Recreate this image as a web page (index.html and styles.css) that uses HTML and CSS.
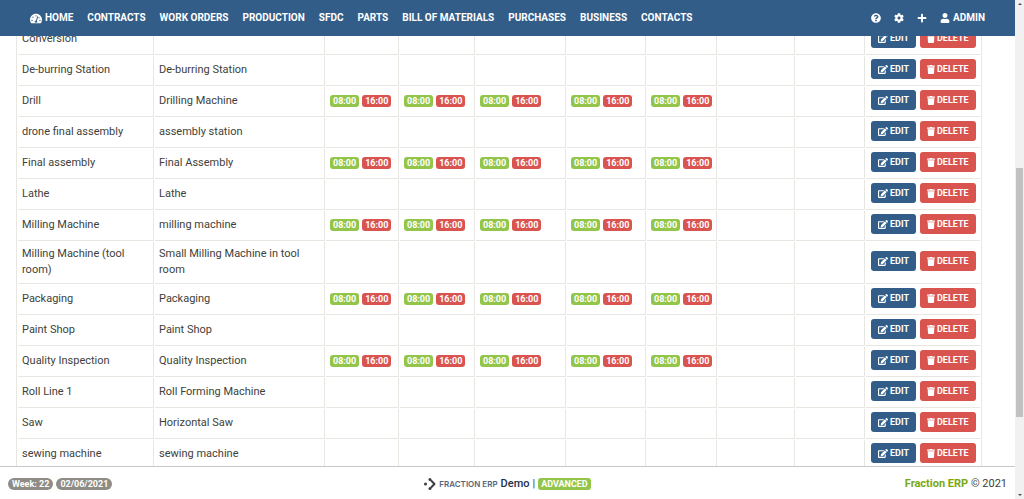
FILE: index.html
```html
<!DOCTYPE html>
<html lang="en">
<head>
    <meta charset="UTF-8">
    <meta name="viewport" content="width=device-width, initial-scale=1.0">
    <title>Fraction ERP - Work Stations</title>
    <link rel="stylesheet" href="styles.css">
</head>
<body>
    <!-- Icons -->
    <svg class="sprite" aria-hidden="true">
        <symbol id="i-dash" viewBox="0 0 576 512"><path fill-rule="evenodd" d="M288 32C129 32 0 161 0 320c0 53 14 102 39 145 6 10 16 15 27 15h444c11 0 21-5 27-15 25-43 39-92 39-145C576 161 447 32 288 32zm0 64c18 0 32 14 32 32s-14 32-32 32-32-14-32-32 14-32 32-32zM96 384c-18 0-32-14-32-32s14-32 32-32 32 14 32 32-14 32-32 32zm48-160c-18 0-32-14-32-32s14-32 32-32 32 14 32 32-14 32-32 32zm247-40l-62 185c14 12 23 29 23 47 0 12-3 23-9 32H233c-6-9-9-20-9-32 0-34 27-62 61-64l61-183c4-13 18-20 30-16 13 5 20 18 15 31zm14 25c7-10 17-17 27-17 18 0 32 14 32 32s-14 32-32 32c-16 0-28-11-31-25zM480 384c-18 0-32-14-32-32s14-32 32-32 32 14 32 32-14 32-32 32z"/></symbol>
        <symbol id="i-help" viewBox="0 0 512 512"><path d="M504 256c0 137-111 248-248 248S8 393 8 256C8 119 119 8 256 8s248 111 248 248zM262.700 90c-54.500 0-89.300 23-116.500 63.800-3.600 5.300-2.400 12.400 2.700 16.300l34.700 26.300c5.200 3.900 12.600 3 16.700-2.100 17.900-22.700 30.100-35.800 57.300-35.800 20.400 0 45.700 13.100 45.700 33 0 15-12.400 22.700-32.500 34C247.100 238.500 216 255 216 296v4c0 6.600 5.400 12 12 12h56c6.600 0 12-5.400 12-12v-1.300c0-28.700 83.800-29.900 83.800-107.500C379.800 132.700 319.200 90 262.700 90zM256 338c-25.400 0-46 20.600-46 46s20.600 46 46 46 46-20.600 46-46-20.600-46-46-46z"/></symbol>
        <symbol id="i-cog" viewBox="0 0 512 512"><path d="M487.400 315.700l-42.600-24.600c4.300-23.200 4.300-47 0-70.200l42.600-24.600c4.900-2.800 7.100-8.600 5.500-14-11.100-35.600-30-67.800-54.700-94.600-3.800-4.100-10-5.100-14.800-2.300L380.800 110c-17.900-15.400-38.500-27.300-60.800-35.100V25.800c0-5.600-3.900-10.500-9.400-11.700-36.700-8.200-74.300-7.800-109.200 0-5.500 1.200-9.400 6.100-9.400 11.700V75c-22.200 7.900-42.800 19.800-60.800 35.100L88.700 85.500c-4.900-2.800-11-1.900-14.800 2.300-24.700 26.700-43.600 58.900-54.700 94.600-1.700 5.400.6 11.200 5.500 14L67.300 221c-4.300 23.200-4.300 47 0 70.200l-42.600 24.600c-4.900 2.800-7.100 8.600-5.500 14 11.100 35.600 30 67.800 54.700 94.600 3.800 4.100 10 5.100 14.800 2.300l42.600-24.600c17.900 15.400 38.500 27.300 60.800 35.100v49.200c0 5.600 3.900 10.500 9.400 11.700 36.700 8.200 74.300 7.800 109.200 0 5.500-1.200 9.400-6.100 9.400-11.700v-49.200c22.200-7.900 42.800-19.800 60.800-35.100l42.600 24.600c4.900 2.800 11 1.900 14.800-2.300 24.700-26.700 43.600-58.900 54.700-94.600 1.500-5.500-.7-11.300-5.600-14.100zM256 336c-44.100 0-80-35.900-80-80s35.900-80 80-80 80 35.900 80 80-35.900 80-80 80z"/></symbol>
        <symbol id="i-plus" viewBox="0 0 448 512"><path d="M416 208H272V64c0-17.700-14.300-32-32-32h-32c-17.700 0-32 14.300-32 32v144H32c-17.700 0-32 14.300-32 32v32c0 17.700 14.300 32 32 32h144v144c0 17.700 14.300 32 32 32h32c17.700 0 32-14.300 32-32V304h144c17.700 0 32-14.300 32-32v-32c0-17.700-14.300-32-32-32z"/></symbol>
        <symbol id="i-user" viewBox="0 0 448 512"><path d="M224 256c70.700 0 128-57.300 128-128S294.700 0 224 0 96 57.300 96 128s57.300 128 128 128zm89.600 32h-16.700c-22.200 10.200-46.900 16-72.900 16s-50.600-5.800-72.900-16h-16.700C60.200 288 0 348.200 0 422.400V464c0 26.500 21.500 48 48 48h352c26.500 0 48-21.500 48-48v-41.600c0-74.200-60.200-134.400-134.400-134.400z"/></symbol>
        <symbol id="i-edit" viewBox="0 0 576 512"><path d="M402.600 83.200l90.200 90.200c3.800 3.800 3.800 10 0 13.800L274.400 405.600l-92.800 10.300c-12.400 1.400-22.900-9.100-21.500-21.500l10.300-92.800L388.800 83.200c3.800-3.800 10-3.800 13.800 0zm162-22.900l-48.800-48.800c-15.200-15.200-39.900-15.200-55.200 0l-35.400 35.400c-3.800 3.800-3.800 10 0 13.800l90.200 90.200c3.800 3.800 10 3.800 13.800 0l35.400-35.400c15.200-15.300 15.200-40 0-55.200zM384 346.200V448H64V128h229.800c3.200 0 6.200-1.300 8.500-3.500l40-40c7.600-7.600 2.200-20.500-8.500-20.500H48C21.500 64 0 85.500 0 112v352c0 26.500 21.500 48 48 48h352c26.500 0 48-21.500 48-48V306.200c0-10.700-12.900-16-20.500-8.500l-40 40c-2.200 2.300-3.500 5.300-3.500 8.500z"/></symbol>
        <symbol id="i-trash" viewBox="0 0 448 512"><path d="M432 32H312l-9.400-18.700A24 24 0 0 0 281.100 0H166.800a23.700 23.700 0 0 0-21.400 13.300L136 32H16A16 16 0 0 0 0 48v32a16 16 0 0 0 16 16h416a16 16 0 0 0 16-16V48a16 16 0 0 0-16-16zM53.200 467a48 48 0 0 0 47.900 45h245.800a48 48 0 0 0 47.900-45L416 128H32z"/></symbol>
    </svg>

    <div class="page">
        <header class="navbar">
            <nav class="nav-main">
                <a href="#"><svg class="icon icon-wide"><use href="#i-dash"/></svg> HOME</a>
                <a href="#">CONTRACTS</a>
                <a href="#">WORK ORDERS</a>
                <a href="#">PRODUCTION</a>
                <a href="#">SFDC</a>
                <a href="#">PARTS</a>
                <a href="#">BILL OF MATERIALS</a>
                <a href="#">PURCHASES</a>
                <a href="#">BUSINESS</a>
                <a href="#">CONTACTS</a>
            </nav>
            <nav class="nav-user">
                <a href="#" aria-label="Help"><svg class="icon"><use href="#i-help"/></svg></a>
                <a href="#" aria-label="Settings"><svg class="icon"><use href="#i-cog"/></svg></a>
                <a href="#" aria-label="Add"><svg class="icon"><use href="#i-plus"/></svg></a>
                <a href="#"><svg class="icon"><use href="#i-user"/></svg> ADMIN</a>
            </nav>
        </header>

        <main class="content">
            <table class="stations">
                <colgroup>
                    <col class="c-name"><col class="c-desc"><col class="c-mon"><col class="c-tue"><col class="c-wed">
                    <col class="c-thu"><col class="c-fri"><col class="c-sat"><col class="c-sun"><col class="c-actions">
                </colgroup>
                <tbody id="stationRows"></tbody>
            </table>
        </main>

        <footer class="footer">
            <div class="footer-left">
                <span class="pill">Week: 22</span>
                <span class="pill">02/06/2021</span>
            </div>
            <div class="footer-mid">
                <svg class="logo" viewBox="0 0 24 24" aria-hidden="true">
                    <path d="M15 6l6 6-6 6" fill="none" stroke="#3b3b40" stroke-width="4" stroke-linecap="round" stroke-linejoin="round"/>
                    <circle cx="3" cy="12" r="3"/><circle cx="12" cy="3" r="3"/><circle cx="12" cy="21" r="3"/>
                </svg>
                <span class="brand">FRACTION ERP</span>
                <span class="demo">Demo</span>
                <span>|</span>
                <span class="badge open">ADVANCED</span>
            </div>
            <div class="footer-right"><a href="#">Fraction ERP</a> © 2021</div>
        </footer>
    </div>

    <!-- Scroll bar -->
    <div class="scrollbar" aria-hidden="true">
        <span class="arrow up"></span>
        <div class="track"><div class="thumb"></div></div>
        <span class="arrow down"></span>
    </div>

    <script src="script.js"></script>
</body>
</html>
```
FILE: styles.css
```css
* {
    box-sizing: border-box;
}

body {
    font-family: Roboto, "Liberation Sans", sans-serif;
    font-size: 11px;
    line-height: 16px;
    color: #3e3f3a;
    background-color: #fff;
    display: flex;
    height: 100vh;
    margin: 0;
    overflow: hidden;
}

a {
    color: inherit;
    text-decoration: none;
}

.sprite {
    display: none;
}

.icon {
    width: 10px;
    height: 10px;
    fill: currentColor;
}

.icon-wide {
    width: 12px;
    height: 11px;
}

.page {
    flex: 1;
    min-width: 0;
    display: flex;
    flex-direction: column;
}

/* Top bar */
.navbar {
    position: relative;
    z-index: 1;
    flex: none;
    display: flex;
    justify-content: space-between;
    align-items: center;
    height: 36px;
    padding: 0 30px;
    background-color: #325d88;
    color: #fff;
    font-size: 10px;
    font-weight: 700;
}

.nav-main,
.nav-user {
    display: flex;
    gap: 14px;
    white-space: nowrap;
}

.nav-user {
    gap: 13px;
}

.navbar a {
    display: flex;
    align-items: center;
    gap: 3px;
}

/* Table, scrolled part way under the top bar */
.content {
    flex: 1;
    min-height: 0;
    margin-top: -12px;
    padding: 0 33px 0 16px;
    overflow: hidden;
}

.stations {
    width: 100%;
    table-layout: fixed;
    border-collapse: separate;
    border-spacing: 1px;
    border: 1px solid #e8e6e0;
    border-width: 0 1px;
}

.c-name { width: 136px; }
.c-desc { width: 170px; }
.c-mon { width: 73px; }
.c-tue { width: 75px; }
.c-wed { width: 90px; }
.c-thu { width: 79px; }
.c-fri { width: 70px; }
.c-sat { width: 77px; }
.c-sun { width: 69px; }
.c-actions { width: 114px; }

.stations td {
    height: 30px;
    padding: 4px 4px 5px;
    border: 1px solid #e8e6e0;
    border-width: 0 1px 1px 0;
    vertical-align: middle;
}

.stations td:last-child {
    padding: 3px 4px 6px 5px;
    border-right: 0;
}

.times,
.actions {
    display: flex;
    align-items: center;
    gap: 3px;
}

.actions {
    gap: 4px;
}

.badge {
    padding: 0 3px;
    border-radius: 3px;
    font-size: 9px;
    font-weight: 700;
    line-height: 12px;
    color: #fff;
}

.open {
    background-color: #93c54b;
}

.close {
    background-color: #d9534f;
}

.btn {
    display: flex;
    align-items: center;
    gap: 2px;
    height: 20px;
    padding: 0 7px;
    border: 0;
    border-radius: 3px;
    font-family: inherit;
    font-size: 9px;
    font-weight: 700;
    color: #fff;
}

.btn .icon {
    height: 9px;
}

.btn-delete .icon {
    width: 8px;
}

.btn-edit {
    background-color: #325d88;
}

.btn-delete {
    background-color: #d9534f;
}

/* Footer */
.footer {
    flex: none;
    display: grid;
    grid-template-columns: 1fr auto 1fr;
    align-items: center;
    height: 33px;
    padding: 2px 8px 0;
    border-top: 1px solid #c8c8c8;
    background-color: #fff;
}

.footer-left,
.footer-mid {
    display: flex;
    align-items: center;
    gap: 3px;
}

.footer-right {
    text-align: right;
}

.footer-right a {
    color: #79a80f;
    font-weight: 700;
}

.pill {
    padding: 0 4px;
    border-radius: 6px;
    background-color: #8e8c84;
    color: #fff;
    font-size: 9px;
    font-weight: 700;
    line-height: 12px;
}

.logo {
    width: 12px;
    height: 12px;
    fill: #3b3b40;
}

.brand {
    font-family: Inter, sans-serif;
    font-size: 8px;
    font-weight: 600;
    color: #56647c;
}

.demo {
    font-weight: 500;
    color: #22304a;
}

/* Scroll bar */
.scrollbar {
    flex: none;
    display: flex;
    flex-direction: column;
    align-items: center;
    justify-content: space-between;
    width: 9px;
    padding: 3px 0;
    background-color: #f1f1f1;
}

.track {
    flex: 1;
    width: 7px;
}

.thumb {
    height: 51%;
    margin-top: 163px;
    background-color: #c1c1c1;
}

.arrow {
    border: 2px solid transparent;
}

.up {
    border-top: 0;
    border-bottom-color: #505050;
}

.down {
    border-bottom: 0;
    border-top-color: #505050;
}
```
FILE: script.js
```js
// name, description, has opening times
const stations = [
    ["Conversion", "", false],
    ["De-burring Station", "De-burring Station", false],
    ["Drill", "Drilling Machine", true],
    ["drone final assembly", "assembly station", false],
    ["Final assembly", "Final Assembly", true],
    ["Lathe", "Lathe", false],
    ["Milling Machine", "milling machine", true],
    ["Milling Machine (tool room)", "Small Milling Machine in tool room", false],
    ["Packaging", "Packaging", true],
    ["Paint Shop", "Paint Shop", false],
    ["Quality Inspection", "Quality Inspection", true],
    ["Roll Line 1", "Roll Forming Machine", false],
    ["Saw", "Horizontal Saw", false],
    ["sewing machine", "sewing machine", false]
];

const times = '<div class="times"><span class="badge open">08:00</span><span class="badge close">16:00</span></div>';

const actions = `<div class="actions">
    <button type="button" class="btn btn-edit"><svg class="icon"><use href="#i-edit"/></svg>EDIT</button>
    <button type="button" class="btn btn-delete"><svg class="icon"><use href="#i-trash"/></svg>DELETE</button>
</div>`;

document.getElementById("stationRows").innerHTML = stations.map(([name, description, open]) => {
    // Monday to Friday have times, the weekend is empty
    const week = `<td>${open ? times : ""}</td>`.repeat(5) + "<td></td><td></td>";
    return `<tr><td>${name}</td><td>${description}</td>${week}<td>${actions}</td></tr>`;
}).join("");
```
